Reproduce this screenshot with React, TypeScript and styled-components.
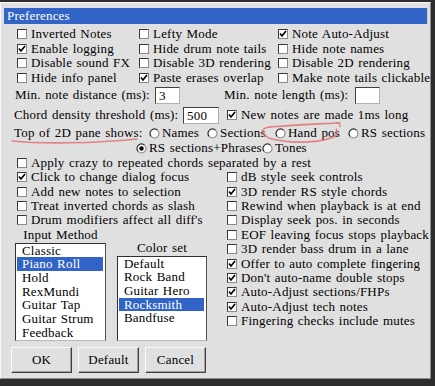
import styled, { createGlobalStyle } from "styled-components";

const GlobalStyle = createGlobalStyle`
  html, body {
    margin: 0;
    padding: 0;
    background: #2e2e2e;
  }
`;

const Screen = styled.div`
  position: relative;
  width: 435px;
  height: 386px;
  padding-top: 2px;
  box-sizing: border-box;
  overflow: hidden;
`;

const Dialog = styled.div`
  width: 431px;
  height: 377px;
  box-sizing: border-box;
  background: #e0e0e0;
  border-top: 1px solid #f6f6f6;
  border-left: 1px solid #f6f6f6;
  border-right: 1px solid #8c8c8c;
  border-bottom: 1px solid #8c8c8c;
  color: #000;
  font-family: "Liberation Serif", "DejaVu Serif", serif;
  font-size: 13px;
  letter-spacing: 0.2px;
  word-spacing: 1px;
  display: flex;
  flex-direction: column;
  white-space: nowrap;
`;

const TitleBar = styled.div`
  margin: 5px 2px 0 3px;
  height: 16px;
  line-height: 16px;
  padding-left: 3px;
  background: #3164c6;
  color: #fff;
  border-right: 1px solid #c8c8c8;
`;

const CheckGrid = styled.div`
  display: grid;
  grid-template-columns: 122px 139px 1fr;
  grid-auto-rows: 14.5px;
  padding: 3px 0 0 16px;
`;

const CheckItem = styled.div<{ $h: number }>`
  display: flex;
  align-items: center;
  gap: 4px;
  height: ${(p) => p.$h}px;
`;

const Box = styled.span`
  display: inline-flex;
  flex: none;
  width: 10px;
  height: 10px;
  box-sizing: border-box;
  background: #fff;
  border-top: 1px solid #383838;
  border-left: 1px solid #383838;
  border-right: 1px solid #8a8a8a;
  border-bottom: 1px solid #8a8a8a;
`;

const FieldRow = styled.div`
  display: flex;
  align-items: center;
  height: 20px;
  padding-left: 13px;
`;

const FieldGroup = styled.div<{ $w: number; $ml?: number }>`
  display: flex;
  align-items: center;
  width: ${(p) => p.$w}px;
  margin-left: ${(p) => p.$ml ?? 0}px;
  flex: none;
`;

const TextInput = styled.div<{ $w: number }>`
  margin-left: auto;
  width: ${(p) => p.$w}px;
  height: 17px;
  box-sizing: border-box;
  background: #fff;
  border-top: 1px solid #404040;
  border-left: 1px solid #404040;
  border-right: 1px solid #b0b0b0;
  border-bottom: 1px solid #b0b0b0;
  padding-left: 3px;
  line-height: 16px;
`;

const RadioRow = styled.div<{ $h: number }>`
  display: flex;
  align-items: center;
  height: ${(p) => p.$h}px;
  padding-left: 135px;
`;

const RadioLabel = styled.div`
  width: 135px;
  margin-left: -122px;
  flex: none;
`;

const RadioItem = styled.div<{ $w?: number }>`
  display: flex;
  align-items: center;
  gap: 2px;
  flex: none;
  width: ${(p) => (p.$w ? `${p.$w}px` : "auto")};
`;

const Lower = styled.div`
  display: flex;
`;

const LeftCol = styled.div`
  width: 226px;
  flex: none;
  display: flex;
  flex-direction: column;
`;

const CheckColumn = styled.div<{ $pl: number }>`
  display: flex;
  flex-direction: column;
  padding-left: ${(p) => p.$pl}px;
`;

const ListsRow = styled.div`
  display: flex;
  align-items: flex-end;
  padding-left: 14px;
  gap: 11px;
`;

const ListGroup = styled.div<{ $w: number }>`
  display: flex;
  flex-direction: column;
  align-items: center;
  width: ${(p) => p.$w}px;
`;

const ListCaption = styled.div<{ $mb: number }>`
  height: 14px;
  line-height: 14px;
  margin-bottom: ${(p) => p.$mb}px;
`;

const ListBox = styled.div<{ $h: number }>`
  width: 100%;
  height: ${(p) => p.$h}px;
  box-sizing: border-box;
  background: #fff;
  border-top: 1px solid #303030;
  border-left: 1px solid #303030;
  border-right: 1px solid #505050;
  border-bottom: 1px solid #b8b8b8;
`;

const ListItem = styled.div<{ $selected?: boolean }>`
  height: 13.7px;
  line-height: 13.7px;
  margin: 0 2px 0 1px;
  padding-left: 5px;
  background: ${(p) => (p.$selected ? "#3164c6" : "transparent")};
  color: ${(p) => (p.$selected ? "#fff" : "#000")};
`;

const ButtonRow = styled.div`
  display: flex;
  gap: 6px;
  padding-left: 10px;
  margin-top: 6px;
`;

const Button = styled.div`
  width: 61px;
  height: 26px;
  box-sizing: border-box;
  display: flex;
  align-items: center;
  justify-content: center;
  background: #e0e0e0;
  border-top: 1px solid #fbfbfb;
  border-left: 1px solid #fbfbfb;
  border-right: 1px solid #404040;
  border-bottom: 1px solid #404040;
  box-shadow: inset -1px -1px 0 #a0a0a0;
`;

const Annotations = styled.svg`
  position: absolute;
  left: 0;
  top: 0;
  pointer-events: none;
`;

function Check({ label, checked, h = 14.5 }: { label: string; checked?: boolean; h?: number }) {
  return (
    <CheckItem $h={h}>
      <Box>
        {checked && (
          <svg width="8" height="8" viewBox="0 0 8 8">
            <polyline points="1,3.5 3,6 7,1" fill="none" stroke="#000" strokeWidth="1.7" />
          </svg>
        )}
      </Box>
      <span>{label}</span>
    </CheckItem>
  );
}

function Radio({ label, checked, w }: { label: string; checked?: boolean; w?: number }) {
  return (
    <RadioItem $w={w}>
      <svg width="11" height="11" viewBox="0 0 11 11">
        <circle cx="5.5" cy="5.5" r="4.5" fill="#fff" />
        <path d="M2.3 8.7 A4.5 4.5 0 0 1 8.7 2.3" fill="none" stroke="#2a2a2a" strokeWidth="1.2" />
        <path d="M8.7 2.3 A4.5 4.5 0 0 1 2.3 8.7" fill="none" stroke="#8a8a8a" strokeWidth="1.1" />
        {checked && <circle cx="5.5" cy="5.5" r="2.2" fill="#000" />}
      </svg>
      <span>{label}</span>
    </RadioItem>
  );
}

const topChecks: [string, boolean][] = [
  ["Inverted Notes", false],
  ["Lefty Mode", false],
  ["Note Auto-Adjust", true],
  ["Enable logging", true],
  ["Hide drum note tails", false],
  ["Hide note names", false],
  ["Disable sound FX", false],
  ["Disable 3D rendering", false],
  ["Disable 2D rendering", false],
  ["Hide info panel", false],
  ["Paste erases overlap", true],
  ["Make note tails clickable", false],
];

const leftChecks: [string, boolean][] = [
  ["Click to change dialog focus", true],
  ["Add new notes to selection", false],
  ["Treat inverted chords as slash", false],
  ["Drum modifiers affect all diff's", false],
];

const rightChecks: [string, boolean][] = [
  ["dB style seek controls", false],
  ["3D render RS style chords", true],
  ["Rewind when playback is at end", false],
  ["Display seek pos. in seconds", false],
  ["EOF leaving focus stops playback", false],
  ["3D render bass drum in a lane", false],
  ["Offer to auto complete fingering", true],
  ["Don't auto-name double stops", true],
  ["Auto-Adjust sections/FHPs", true],
  ["Auto-Adjust tech notes", true],
  ["Fingering checks include mutes", false],
];

const inputMethods = ["Classic", "Piano Roll", "Hold", "RexMundi", "Guitar Tap", "Guitar Strum", "Feedback"];
const colorSets = ["Default", "Rock Band", "Guitar Hero", "Rocksmith", "Bandfuse"];

export default function App() {
  return (
    <Screen>
      <GlobalStyle />
      <Dialog>
        <TitleBar>Preferences</TitleBar>
        <CheckGrid>
          {topChecks.map(([l, c]) => (
            <Check key={l} label={l} checked={c} />
          ))}
        </CheckGrid>
        <FieldRow>
          <FieldGroup $w={165} $ml={1}>
            <span>Min. note distance (ms):</span>
            <TextInput $w={25}>3</TextInput>
          </FieldGroup>
          <FieldGroup $w={156} $ml={44}>
            <span>Min. note length (ms):</span>
            <TextInput $w={25} />
          </FieldGroup>
        </FieldRow>
        <FieldRow>
          <FieldGroup $w={205}>
            <span>Chord density threshold (ms):</span>
            <TextInput $w={36}>500</TextInput>
          </FieldGroup>
          <CheckColumn $pl={8}>
            <Check label="New notes are made 1ms long" checked />
          </CheckColumn>
        </FieldRow>
        <RadioRow $h={16}>
          <RadioLabel>Top of 2D pane shows:</RadioLabel>
          <Radio label="Names" w={58} />
          <Radio label="Sections" w={68} />
          <Radio label="Hand pos" w={73} />
          <Radio label="RS sections" />
        </RadioRow>
        <RadioRow $h={14.5}>
          <Radio label="RS sections+Phrases" checked w={126} />
          <Radio label="Tones" />
        </RadioRow>
        <CheckColumn $pl={16}>
          <Check label="Apply crazy to repeated chords separated by a rest" />
        </CheckColumn>
        <Lower>
          <LeftCol>
            <CheckColumn $pl={16}>
              {leftChecks.map(([l, c]) => (
                <Check key={l} label={l} checked={c} h={14.4} />
              ))}
            </CheckColumn>
            <ListsRow>
              <ListGroup $w={91}>
                <ListCaption $mb={1}>Input Method</ListCaption>
                <ListBox $h={98}>
                  {inputMethods.map((m) => (
                    <ListItem key={m} $selected={m === "Piano Roll"}>
                      {m}
                    </ListItem>
                  ))}
                </ListBox>
              </ListGroup>
              <ListGroup $w={90}>
                <ListCaption $mb={1}>Color set</ListCaption>
                <ListBox $h={85}>
                  {colorSets.map((m) => (
                    <ListItem key={m} $selected={m === "Rocksmith"}>
                      {m}
                    </ListItem>
                  ))}
                </ListBox>
              </ListGroup>
            </ListsRow>
            <ButtonRow>
              <Button>OK</Button>
              <Button>Default</Button>
              <Button>Cancel</Button>
            </ButtonRow>
          </LeftCol>
          <CheckColumn $pl={0}>
            {rightChecks.map(([l, c]) => (
              <Check key={l} label={l} checked={c} h={14.4} />
            ))}
          </CheckColumn>
        </Lower>
      </Dialog>
      <Annotations width="435" height="386" viewBox="0 0 435 386">
        <path
          d="M12 141 C 40 144, 95 143.5, 137 139"
          fill="none"
          stroke="#e46a6a"
          strokeOpacity="0.8"
          strokeWidth="1.6"
          strokeLinecap="round"
        />
        <path
          d="M338 123 C 318 124, 285 125, 267 127.5 C 260 129, 262 136, 272 139 C 292 144, 326 143, 337 135 L 336.5 129"
          fill="none"
          stroke="#e46a6a"
          strokeOpacity="0.8"
          strokeWidth="1.6"
          strokeLinecap="round"
        />
        <path d="M336 123 L 339.5 122.5 L 340 127" fill="none" stroke="#e46a6a" strokeOpacity="0.8" strokeWidth="1.4" />
      </Annotations>
    </Screen>
  );
}
